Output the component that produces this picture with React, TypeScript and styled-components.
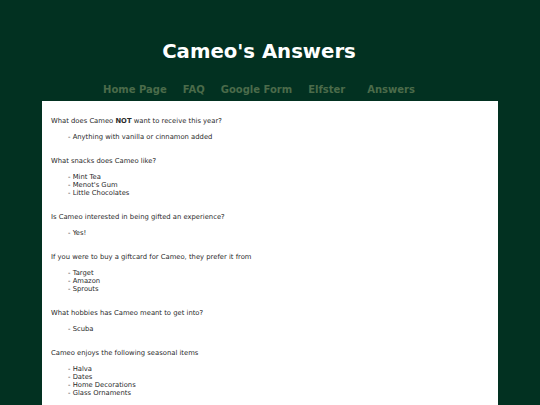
import React from "react";
import styled, { createGlobalStyle } from "styled-components";

const GlobalStyle = createGlobalStyle`
  html, body {
    margin: 0;
    padding: 0;
    background: #023121;
  }
  body {
    font-family: "DejaVu Sans", Verdana, sans-serif;
  }
`;

const Page = styled.div`
  min-height: 405px;
  display: flex;
  flex-direction: column;
  align-items: center;
`;

const Header = styled.header`
  display: flex;
  flex-direction: column;
  align-items: center;
  padding-right: 22px;
`;

const Title = styled.h1`
  margin: 40px 0 0;
  font-size: 19.7px;
  line-height: 24px;
  font-weight: bold;
  color: #ffffff;
`;

const Nav = styled.nav`
  display: flex;
  margin-top: 18px;
  height: 14px;
  align-items: center;
`;

const NavLink = styled.a<{ $gap?: number }>`
  margin-left: ${(p) => p.$gap ?? 16}px;
  font-size: 10px;
  font-weight: bold;
  color: #4b6b4a;
  text-decoration: none;
  &:first-child {
    margin-left: 0;
  }
`;

const Panel = styled.main`
  margin-top: 5px;
  width: 456px;
  flex: 1;
  box-sizing: border-box;
  background: #ffffff;
  padding: 16px 9px 20px;
  font-size: 6.8px;
  line-height: 8px;
  color: #2a2a2a;
`;

const Section = styled.section`
  margin-bottom: 16px;
`;

const Question = styled.p`
  margin: 0 0 8px;
`;

const Items = styled.ul`
  list-style: none;
  margin: 0;
  padding-left: 17px;
`;

const data: { q: React.ReactNode; a: string[] }[] = [
  {
    q: (
      <>
        What does Cameo <b>NOT</b> want to receive this year?
      </>
    ),
    a: ["Anything with vanilla or cinnamon added"],
  },
  { q: "What snacks does Cameo like?", a: ["Mint Tea", "Menot's Gum", "Little Chocolates"] },
  { q: "Is Cameo interested in being gifted an experience?", a: ["Yes!"] },
  {
    q: "If you were to buy a giftcard for Cameo, they prefer it from",
    a: ["Target", "Amazon", "Sprouts"],
  },
  { q: "What hobbies has Cameo meant to get into?", a: ["Scuba"] },
  {
    q: "Cameo enjoys the following seasonal items",
    a: ["Halva", "Dates", "Home Decorations", "Glass Ornaments"],
  },
];

export default function App() {
  return (
    <Page>
      <GlobalStyle />
      <Header>
        <Title>Cameo's Answers</Title>
        <Nav>
          <NavLink href="#">Home Page</NavLink>
          <NavLink href="#">FAQ</NavLink>
          <NavLink href="#">Google Form</NavLink>
          <NavLink href="#">Elfster</NavLink>
          <NavLink href="#" $gap={22}>Answers</NavLink>
        </Nav>
      </Header>
      <Panel>
        {data.map((s, i) => (
          <Section key={i}>
            <Question>{s.q}</Question>
            <Items>
              {s.a.map((item) => (
                <li key={item}>- {item}</li>
              ))}
            </Items>
          </Section>
        ))}
      </Panel>
    </Page>
  );
}
